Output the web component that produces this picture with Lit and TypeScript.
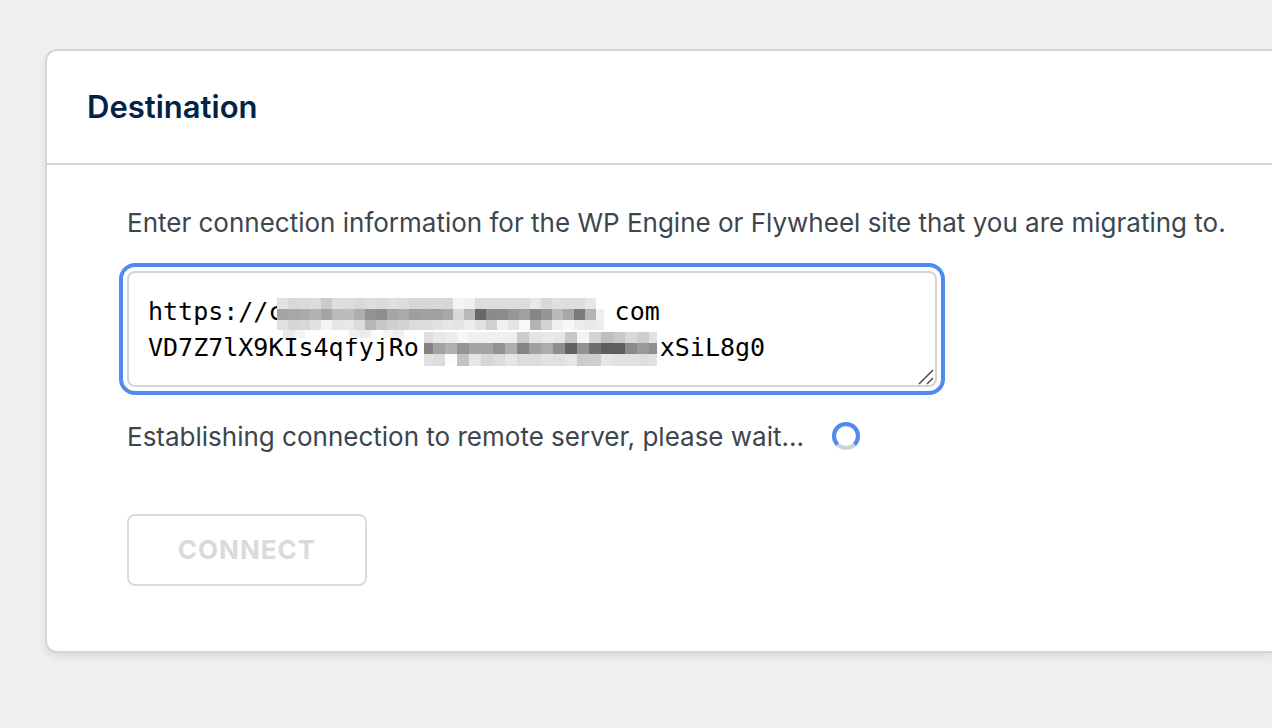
import { LitElement, html, css, svg } from "lit";
import { customElement, property } from "lit/decorators.js";

interface Row { x: number; start: number; end: number; y: number; h: number; tones: number[]; }
interface Mosaic { cell: number; rows: Row[]; }

// Coordinates are relative to the text box; "start" and "end" trim the outer cells.
const MOSAICS: Mosaic[] = [
  { cell: 11, rows: [
    { x: 150, start: 150, end: 470, y: 27, h: 11, tones: [226,216,218,220,202,222,220,216,222,218,224,220,214,214,216,214,244,240,220,220,220,220,220,232,216,224,222,222,230] },
    { x: 150, start: 150, end: 477, y: 38, h: 11, tones: [164,168,170,178,164,186,188,174,146,142,166,170,158,160,160,168,216,184,104,138,140,150,160,134,150,186,168,124,180,240] },
    { x: 150, start: 150, end: 477, y: 49, h: 10, tones: [224,214,216,226,244,230,232,220,182,200,208,212,220,220,224,230,228,238,226,208,240,228,250,180,210,240,248,236,232,236] },
    { x: 156, start: 156, end: 297, y: 59, h: 8, tones: [234,244,254,254,254,254,240,236,254,246,240,252,254] },
  ] },
  { cell: 12, rows: [
    { x: 294, start: 297, end: 530, y: 61, h: 11, tones: [222,232,236,246,240,240,240,238,204,228,232,230,200,244,212,190,200,216,206,226] },
    { x: 294, start: 297, end: 530, y: 72, h: 11, tones: [130,162,176,148,164,164,146,174,132,160,172,142,98,146,110,94,94,138,154,142] },
    { x: 294, start: 297, end: 530, y: 83, h: 12, tones: [226,220,252,194,230,214,220,230,220,220,226,224,230,204,206,230,226,224,222,226] },
  ] },
];

@customElement("redaction-mosaic")
export class RedactionMosaic extends LitElement {
  static styles = css`
    :host { position: absolute; inset: 0; pointer-events: none; }
    svg { display: block; width: 100%; height: 100%; }
  `;
  render() {
    return html`<svg aria-hidden="true" shape-rendering="crispEdges">
      ${MOSAICS.map(m => m.rows.map(r => r.tones.map((t, i) => {
        const left = Math.max(r.x + i * m.cell, r.start);
        const right = Math.min(r.x + (i + 1) * m.cell, r.end);
        return svg`<rect x=${left} y=${r.y} width=${Math.max(0, right - left)} height=${r.h}
          fill="rgb(${t},${t},${t})"></rect>`;
      })))}
    </svg>`;
  }
}

@customElement("app-root")
export class AppRoot extends LitElement {
  @property() value = "https://c" + " ".repeat(22) + "com\nVD7Z7lX9KIs4qfyjRo" + " ".repeat(16) + "xSiL8g0";

  static styles = css`
    :host {
      display: block;
      box-sizing: border-box;
      min-height: 100vh;
      padding: 49px 0 76px 45px;
      overflow: hidden;
      background: #efefef;
      color: #3c464e;
      font: 26px/36px Inter, sans-serif;
    }
    * { box-sizing: border-box; }
    .card {
      border: 2px solid #d5d5d5;
      border-right: 0;
      border-radius: 12px 0 0 12px;
      background: #fff;
      box-shadow: 0 4px 8px rgba(0, 0, 0, 0.08);
    }
    .head { padding: 36px 40px; border-bottom: 2px solid #d5d5d5; }
    h2 { margin: 0; color: #002447; font-size: 31px; line-height: 40px; font-weight: 600; }
    .body { padding: 40px 0 65px 80px; }
    p { margin: 0; }
    label { display: block; white-space: nowrap; }
    .field { position: relative; width: 810px; max-width: 100%; margin: 30px 0 32px; }
    textarea {
      display: block;
      width: 100%;
      height: 116px;
      padding: 21px 19px;
      border: 2px solid #d5d5d5;
      border-radius: 8px;
      outline: 4px solid #4f8bee;
      outline-offset: 4px;
      background: #fff;
      color: #000;
      font: 25px/36px "DejaVu Sans Mono", monospace;
      resize: none;
      overflow: hidden;
    }
    .grip { position: absolute; right: 3px; bottom: 2px; width: 16px; height: 16px; }
    .status { display: flex; align-items: flex-start; gap: 28px; }
    .spinner { width: 28px; height: 28px; margin-top: 3px; }
    button {
      display: block;
      width: 240px;
      height: 72px;
      margin-top: 59px;
      padding: 0;
      border: 2px solid #dadada;
      border-radius: 8px;
      background: #fff;
      color: #dadada;
      font: 700 26px/36px Inter, sans-serif;
      letter-spacing: 1px;
      text-transform: uppercase;
    }
  `;

  render() {
    return html`
      <section class="card">
        <header class="head"><h2>Destination</h2></header>
        <div class="body">
          <label for="info">Enter connection information for the WP Engine or Flywheel site that you are migrating to.</label>
          <div class="field">
            <textarea id="info" spellcheck="false" .value=${this.value}></textarea>
            <redaction-mosaic></redaction-mosaic>
            <svg class="grip" viewBox="0 0 16 16" fill="none" stroke="#4a4a4a" stroke-width="1.5" aria-hidden="true">
              <path d="M1 15 15 1M9 15l6-6"></path>
            </svg>
          </div>
          <p class="status" role="status">
            <span>Establishing connection to remote server, please wait...</span>
            <svg class="spinner" viewBox="0 0 28 28" fill="none" stroke-width="4" aria-hidden="true">
              <circle cx="14" cy="14" r="12" stroke="#cbd3df"></circle>
              <path d="M5.5 22.5A12 12 0 1 1 22.5 22.5" stroke="#4f8bee"></path>
            </svg>
          </p>
          <button type="button" disabled>Connect</button>
        </div>
      </section>
    `;
  }
}
